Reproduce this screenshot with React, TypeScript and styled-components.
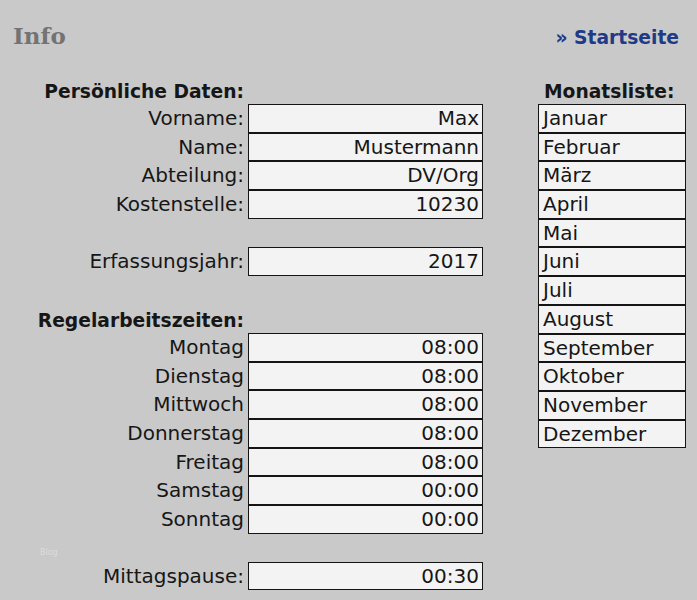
import React from 'react';
import styled, { createGlobalStyle } from 'styled-components';

const GlobalStyle = createGlobalStyle`
  html, body {
    margin: 0;
    padding: 0;
    background: #c9c9c9;
  }
  body {
    font-family: "DejaVu Sans", Verdana, sans-serif;
    color: #161616;
  }
`;

const ROW = 28.7;

const Page = styled.div`
  width: 697px;
  height: 600px;
  overflow: hidden;
`;

const Header = styled.div`
  display: flex;
  justify-content: space-between;
  align-items: baseline;
  height: 80px;
  box-sizing: border-box;
  padding: 22px 18px 0 13px;
`;

const Title = styled.h1`
  margin: 0;
  font-family: "DejaVu Serif", Georgia, serif;
  font-weight: bold;
  font-size: 23px;
  line-height: 28px;
  color: #737373;
`;

const HomeLink = styled.a`
  font-weight: bold;
  font-size: 18.7px;
  line-height: 28px;
  color: #1f3a86;
  text-decoration: none;
`;

const Body = styled.div`
  display: flex;
  align-items: flex-start;
`;

const Form = styled.div`
  display: flex;
  flex-direction: column;
  width: 483px;
`;

const Heading = styled.div`
  height: 24px;
  line-height: 24px;
  font-weight: bold;
  font-size: 18.7px;
  white-space: nowrap;
`;

const FormHeading = styled(Heading)`
  width: 248px;
  box-sizing: border-box;
  padding-right: 4px;
  text-align: right;
`;

const Row = styled.div`
  display: flex;
  height: ${ROW}px;
`;

const Label = styled.div`
  width: 248px;
  box-sizing: border-box;
  padding-right: 4px;
  text-align: right;
  font-size: 20px;
  line-height: ${ROW}px;
  white-space: nowrap;
`;

const Field = styled.div<{ $align?: 'left' | 'right' }>`
  width: ${p => (p.$align === 'left' ? '148px' : '235px')};
  height: ${ROW}px;
  box-sizing: border-box;
  border: 1px solid #141414;
  background: #f3f3f3;
  padding: ${p => (p.$align === 'left' ? '0 4px' : '0 3px')};
  text-align: ${p => p.$align ?? 'right'};
  font-size: 20px;
  line-height: ${ROW - 2}px;
  white-space: nowrap;
  overflow: hidden;
`;

const Spacer = styled.div<{ $h: number }>`
  height: ${p => p.$h}px;
  position: relative;
`;

const Watermark = styled.span`
  position: absolute;
  left: 40px;
  top: 14px;
  font-size: 8px;
  color: #dcdcdc;
`;

const MonthColumn = styled.div`
  display: flex;
  flex-direction: column;
  margin-left: 55px;
  width: 148px;
`;

const MonthHeading = styled(Heading)`
  padding-left: 6px;
`;

const personal = [
  ['Vorname:', 'Max'],
  ['Name:', 'Mustermann'],
  ['Abteilung:', 'DV/Org'],
  ['Kostenstelle:', '10230'],
];

const days = [
  ['Montag', '08:00'],
  ['Dienstag', '08:00'],
  ['Mittwoch', '08:00'],
  ['Donnerstag', '08:00'],
  ['Freitag', '08:00'],
  ['Samstag', '00:00'],
  ['Sonntag', '00:00'],
];

const months = [
  'Januar', 'Februar', 'März', 'April', 'Mai', 'Juni',
  'Juli', 'August', 'September', 'Oktober', 'November', 'Dezember',
];

const FieldRow = ({ label, value }: { label: string; value: string }) => (
  <Row>
    <Label>{label}</Label>
    <Field>{value}</Field>
  </Row>
);

export default function App() {
  return (
    <Page>
      <GlobalStyle />
      <Header>
        <Title>Info</Title>
        <HomeLink href="#">» Startseite</HomeLink>
      </Header>
      <Body>
        <Form>
          <FormHeading>Persönliche Daten:</FormHeading>
          {personal.map(([l, v]) => (
            <FieldRow key={l} label={l} value={v} />
          ))}
          <Spacer $h={28.5} />
          <FieldRow label="Erfassungsjahr:" value="2017" />
          <Spacer $h={33} />
          <FormHeading>Regelarbeitszeiten:</FormHeading>
          {days.map(([l, v]) => (
            <FieldRow key={l} label={l} value={v} />
          ))}
          <Spacer $h={28}>
            <Watermark>Blog</Watermark>
          </Spacer>
          <FieldRow label="Mittagspause:" value="00:30" />
        </Form>
        <MonthColumn>
          <MonthHeading>Monatsliste:</MonthHeading>
          {months.map(m => (
            <Field key={m} $align="left">{m}</Field>
          ))}
        </MonthColumn>
      </Body>
    </Page>
  );
}
